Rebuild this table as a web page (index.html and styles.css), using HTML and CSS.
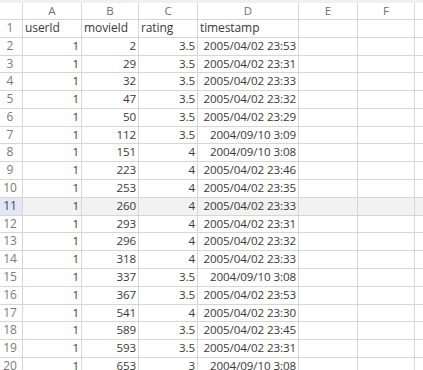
FILE: index.html
```html
<!DOCTYPE html>
<html>
<head>
<meta charset="utf-8">
<link rel="stylesheet" href="styles.css">
</head>
<body>
<div class="sheet">
  <div class="band"></div><div class="band"></div><div class="band"></div><div class="band"></div><div class="band"></div><div class="band"></div><div class="band"></div><div class="band"></div>
  <div class="ch corner"></div><div class="ch">A</div><div class="ch">B</div><div class="ch">C</div><div class="ch">D</div><div class="ch">E</div><div class="ch">F</div><div class="ch last"></div>
  <div class="rh">1</div><div class="c t">userId</div><div class="c t">movieId</div><div class="c t">rating</div><div class="c t">timestamp</div><div class="c"></div><div class="c"></div><div class="c last"></div>
  <div class="rh">2</div><div class="c">1</div><div class="c">2</div><div class="c">3.5</div><div class="c">2005/04/02 23:53</div><div class="c"></div><div class="c"></div><div class="c last"></div>
  <div class="rh">3</div><div class="c">1</div><div class="c">29</div><div class="c">3.5</div><div class="c">2005/04/02 23:31</div><div class="c"></div><div class="c"></div><div class="c last"></div>
  <div class="rh">4</div><div class="c">1</div><div class="c">32</div><div class="c">3.5</div><div class="c">2005/04/02 23:33</div><div class="c"></div><div class="c"></div><div class="c last"></div>
  <div class="rh">5</div><div class="c">1</div><div class="c">47</div><div class="c">3.5</div><div class="c">2005/04/02 23:32</div><div class="c"></div><div class="c"></div><div class="c last"></div>
  <div class="rh">6</div><div class="c">1</div><div class="c">50</div><div class="c">3.5</div><div class="c">2005/04/02 23:29</div><div class="c"></div><div class="c"></div><div class="c last"></div>
  <div class="rh">7</div><div class="c">1</div><div class="c">112</div><div class="c">3.5</div><div class="c">2004/09/10 3:09</div><div class="c"></div><div class="c"></div><div class="c last"></div>
  <div class="rh">8</div><div class="c">1</div><div class="c">151</div><div class="c">4</div><div class="c">2004/09/10 3:08</div><div class="c"></div><div class="c"></div><div class="c last"></div>
  <div class="rh">9</div><div class="c">1</div><div class="c">223</div><div class="c">4</div><div class="c">2005/04/02 23:46</div><div class="c"></div><div class="c"></div><div class="c last"></div>
  <div class="rh">10</div><div class="c">1</div><div class="c">253</div><div class="c">4</div><div class="c">2005/04/02 23:35</div><div class="c"></div><div class="c"></div><div class="c last"></div>
  <div class="rh sel">11</div><div class="c sel">1</div><div class="c sel">260</div><div class="c sel">4</div><div class="c sel">2005/04/02 23:33</div><div class="c sel"></div><div class="c sel"></div><div class="c sel last"></div>
  <div class="rh">12</div><div class="c">1</div><div class="c">293</div><div class="c">4</div><div class="c">2005/04/02 23:31</div><div class="c"></div><div class="c"></div><div class="c last"></div>
  <div class="rh">13</div><div class="c">1</div><div class="c">296</div><div class="c">4</div><div class="c">2005/04/02 23:32</div><div class="c"></div><div class="c"></div><div class="c last"></div>
  <div class="rh">14</div><div class="c">1</div><div class="c">318</div><div class="c">4</div><div class="c">2005/04/02 23:33</div><div class="c"></div><div class="c"></div><div class="c last"></div>
  <div class="rh">15</div><div class="c">1</div><div class="c">337</div><div class="c">3.5</div><div class="c">2004/09/10 3:08</div><div class="c"></div><div class="c"></div><div class="c last"></div>
  <div class="rh">16</div><div class="c">1</div><div class="c">367</div><div class="c">3.5</div><div class="c">2005/04/02 23:53</div><div class="c"></div><div class="c"></div><div class="c last"></div>
  <div class="rh">17</div><div class="c">1</div><div class="c">541</div><div class="c">4</div><div class="c">2005/04/02 23:30</div><div class="c"></div><div class="c"></div><div class="c last"></div>
  <div class="rh">18</div><div class="c">1</div><div class="c">589</div><div class="c">3.5</div><div class="c">2005/04/02 23:45</div><div class="c"></div><div class="c"></div><div class="c last"></div>
  <div class="rh">19</div><div class="c">1</div><div class="c">593</div><div class="c">3.5</div><div class="c">2005/04/02 23:31</div><div class="c"></div><div class="c"></div><div class="c last"></div>
  <div class="rh">20</div><div class="c">1</div><div class="c">653</div><div class="c">3</div><div class="c">2004/09/10 3:08</div><div class="c"></div><div class="c"></div><div class="c last"></div>
</div>
</body>
</html>
```
FILE: styles.css
```css
html, body {
  margin: 0;
  padding: 0;
  background: #ffffff;
  overflow: hidden;
}
.sheet {
  display: grid;
  grid-template-columns: 23px 59px 57px 59px 101px 59px 57px 1fr;
  grid-template-rows: 3px 17px repeat(20, 17.79px);
  width: 423px;
  height: 370px;
  overflow: hidden;
  font-family: "Open Sans", "Noto Sans", sans-serif;
  font-size: 11.6px;
  letter-spacing: -0.1px;
  color: #3a3a3a;
}
.band {
  background: #f0f0f0;
}
.ch, .rh, .c {
  box-sizing: border-box;
  border-right: 1px solid #d6d6d6;
  border-bottom: 1px solid #d6d6d6;
  white-space: nowrap;
  overflow: hidden;
  line-height: 16px;
}
.ch {
  text-align: center;
  font-size: 11.5px;
  letter-spacing: 0;
  color: #707070;
  line-height: 15px;
}
.rh {
  color: #7a7a7a;
  text-align: center;
  padding-right: 2px;
  font-size: 12px;
  letter-spacing: 0;
}
.rh.sel {
  background: #e2e7f3;
  color: #3b4a73;
}
.c {
  text-align: right;
  padding-right: 2px;
}
.c.t {
  text-align: left;
  padding-left: 2px;
  font-size: 12px;
}
.c.sel {
  background: #f2f2f2;
}
.last {
  border-right: none;
}
```
